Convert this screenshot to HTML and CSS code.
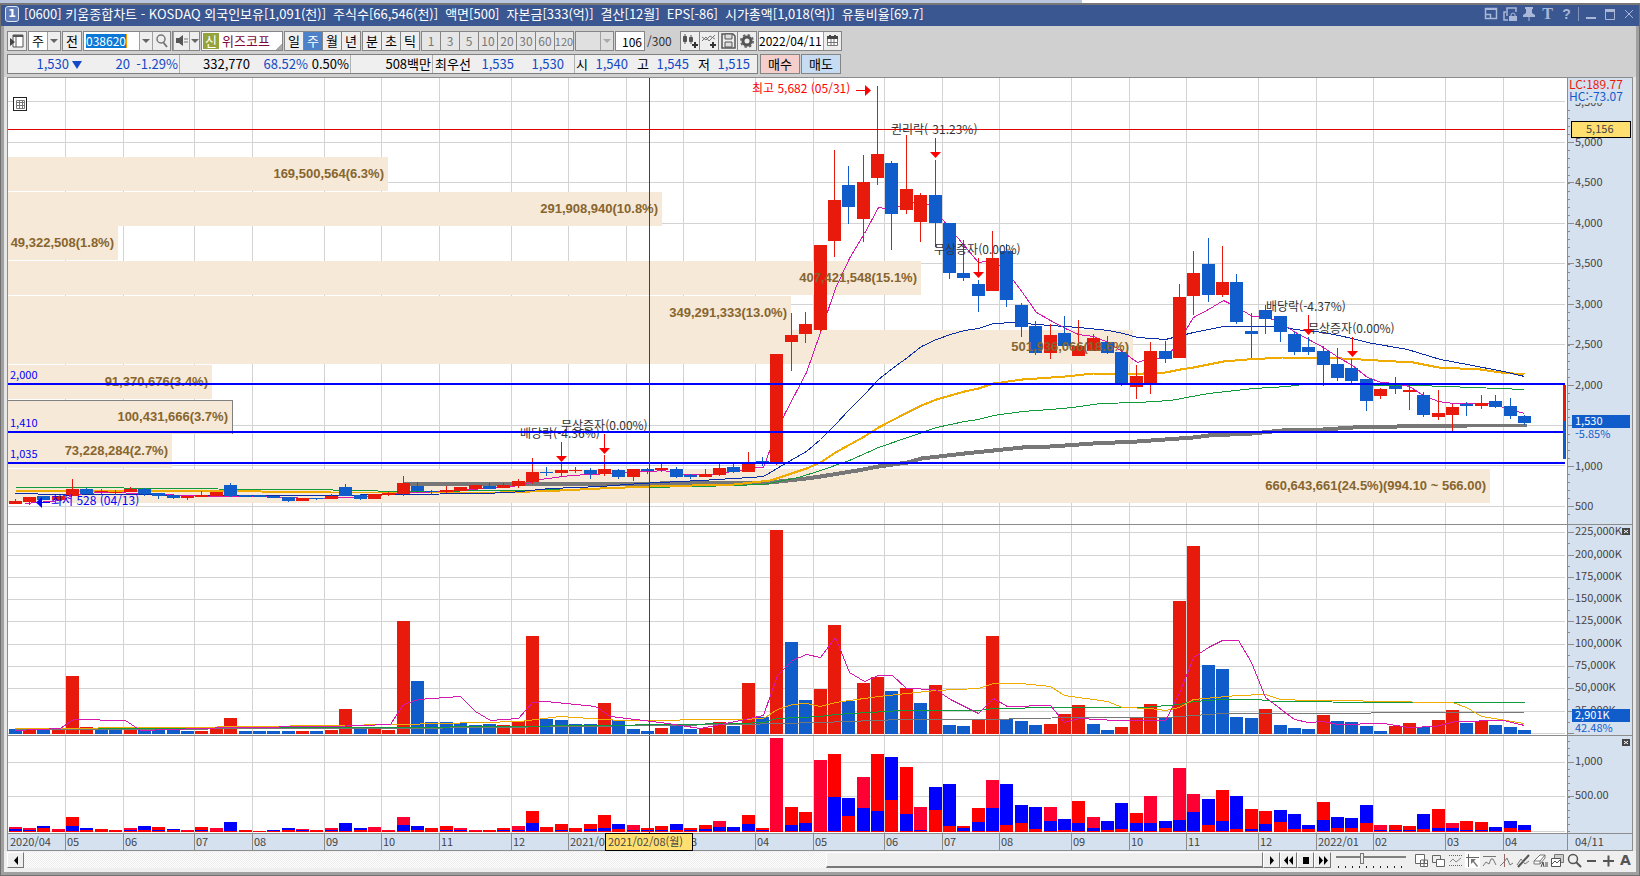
FILE: index.html
```html
<!DOCTYPE html>
<html lang="ko">
<head>
<meta charset="utf-8">
<title>키움종합차트</title>
<link rel="stylesheet" href="styles.css">
</head>
<body>
<div class="backdrop"></div>
<main class="window">
  <header class="titlebar">
    <b class="badge">1</b>
    <h1 class="title"><span>[0600] 키움종합차트 - KOSDAQ 외국인보유[1,091(천)]</span> <span>주식수[66,546(천)]</span> <span>액면[500]</span> <span>자본금[333(억)]</span> <span>결산[12월]</span> <span>EPS[-86]</span> <span>시가총액[1,018(억)]</span> <span>유통비율[69.7]</span></h1>
    <div class="winbtns">
      <button aria-label="화면 배치"><svg width="14" height="14"><path d="M1.500 1.500h11v10h-11zM1.500 7.500h5v4" fill="none" stroke="#a9b8d8" stroke-width="1.500"/><path d="M1 1h12v2H1z" fill="#a9b8d8"/></svg></button>
      <button aria-label="화면 잠금"><svg width="14" height="14"><path d="M4 9V1h9v4M3 5H1v8h4" fill="none" stroke="#a9b8d8" stroke-width="1.500"/><path d="M6 9h8v5H6z" fill="#a9b8d8"/><path d="M8 9V7q2-2 4 0v2" fill="none" stroke="#a9b8d8"/></svg></button>
      <button aria-label="고정"><svg width="14" height="14"><path d="M3 0h8v2h-1v4l3 2v2H7.500v4h-1v-4H1V8l3-2V2H3z" fill="#a9b8d8"/></svg></button>
      <button class="serif">T</button>
      <button class="help">?</button>
      <i class="bar"></i>
      <button aria-label="최소화"><svg width="14" height="14"><path d="M2 10h10v2H2z" fill="#a9b8d8"/></svg></button>
      <button aria-label="최대화"><svg width="14" height="14"><path d="M2.500 3v9.500h9V3z" fill="none" stroke="#a9b8d8"/><path d="M2 2h10v3H2z" fill="#a9b8d8"/></svg></button>
      <button aria-label="닫기"><svg width="14" height="14"><path d="M3 3l8 8M11 3l-8 8" stroke="#a9b8d8"/></svg></button>
    </div>
  </header>

  <section class="tools">
    <div class="row">
      <button class="b w20" aria-label="패널"><svg width="14" height="14"><path d="M3 1h10v12H3z" fill="#fff" stroke="#555"/><path d="M3 1h10v2H3z" fill="#555"/><path d="M6 3v10" stroke="#555"/><path d="M0 4l5 4-5 4z" fill="#444"/></svg></button>
      <span class="combo"><select class="w18" aria-label="주기"><option>주</option></select><i class="arrow w13"></i></span>
      <button class="b w20">전</button>
      <span class="combo"><input class="code" aria-label="종목코드" value=""><mark class="picked">038620</mark><i class="arrow w13"></i><button class="inner w18" aria-label="종목검색"><svg width="14" height="14"><circle cx="6" cy="5" r="4" fill="none" stroke="#777" stroke-width="1.500"/><path d="M8 8l4 5" stroke="#777" stroke-width="2"/></svg></button></span>
      <span class="combo"><button class="inner w16" aria-label="소리"><svg width="14" height="14"><path d="M1 4h3l4-3v11L4 9H1z" fill="#555"/><path d="M10 4v5M12 4v5" stroke="#777" stroke-dasharray="2 1"/></svg></button><i class="arrow w10"></i></span>
      <span class="combo stock"><b>신</b><em>위즈코프</em></span>
      <div class="group"><button>일</button><button class="on">주</button><button>월</button><button>년</button></div>
      <div class="group"><button>분</button><button>초</button><button>틱</button></div>
      <div class="group off"><button>1</button><button>3</button><button>5</button><button>10</button><button>20</button><button>30</button><button>60</button><button>120</button></div>
      <span class="combo dis"><select class="w24" aria-label="단위" disabled><option></option></select><i class="arrow w13"></i></span>
      <input class="count" aria-label="봉 개수" value="106">
      <span class="total">/300</span>
      <div class="group icons">
        <button aria-label="차트 추가"><svg width="16" height="16"><path d="M1.500 3.500h3v5h-3zM3 1v10M7.500 4.500h3v4h-3zM9 2v9" fill="#555" stroke="#555"/><path d="M13 9v6M10 12h6" stroke="#333" stroke-width="2"/></svg></button>
        <button aria-label="지표 추가"><svg width="16" height="16"><path d="M1 8l4-4 3 4 6-6M1 4l4 3 4-4 5 3" fill="none" stroke="#777"/><path d="M12 9v6M9 12h6" stroke="#333" stroke-width="2"/></svg></button>
        <button aria-label="저장"><svg width="16" height="16"><path d="M2 1h11l2 2v12H2z" fill="none" stroke="#555" stroke-width="1.500"/><path d="M5 1h7v5H5zM5 9h7v5H5z" fill="#ddd" stroke="#555"/></svg></button>
        <button aria-label="설정"><svg width="16" height="16"><circle cx="8" cy="8" r="4" fill="none" stroke="#555" stroke-width="3"/><circle cx="8" cy="8" r="6" fill="none" stroke="#666" stroke-width="2" stroke-dasharray="2.400 2.300"/></svg></button>
      </div>
      <span class="combo"><input class="date" aria-label="날짜" value="2022/04/11"><button class="inner w18" aria-label="달력"><svg width="14" height="14"><path d="M1.500 2.500h10v9h-10zM1.500 8.500h10M5 5v7M8 5v7" fill="#fff" stroke="#777"/><path d="M1 2h11v3H1zM3 1h2v2H3zM8 1h2v2H8z" fill="#444"/></svg></button></span>
    </div>
    <div class="row quote">
      <div class="quotes">
        <div class="cell"><span class="n q73">1,530<i class="down"></i></span><span class="n q48">20</span><span class="n q48">-1.29%</span></div>
        <div class="cell"><span class="k q69">332,770</span><span class="n q58">68.52%</span><span class="k q41">0.50%</span></div>
        <div class="cell"><span class="k q80">508백만</span></div>
        <div class="cell"><span class="k q37">최우선</span><span class="n q43">1,535</span><span class="n q50">1,530</span></div>
        <div class="cell"><span class="k q12">시</span><span class="n q40">1,540</span><span class="k q21">고</span><span class="n q40">1,545</span><span class="k q21">저</span><span class="n q40">1,515</span></div>
      </div>
      <button class="trade buy">매수</button>
      <button class="trade sell">매도</button>
    </div>
  </section>

  <section class="chart">
    <div class="plots">
      <svg id="price" height="446"></svg>
      <svg id="volume" height="211"></svg>
      <svg id="credit" height="98"></svg>
      <svg id="dates" height="18"></svg>
    </div>
    <div class="axes">
      <svg id="priceAxis" height="446"></svg>
      <svg id="volumeAxis" height="211"></svg>
      <svg id="creditAxis" height="98"></svg>
      <svg id="dateAxis" height="18"></svg>
    </div>
  </section>

  <footer class="bottom">
    <button class="sb" aria-label="왼쪽"><svg width="14" height="14"><path d="M9 3v9L5 7.500z"/></svg></button>
    <div class="track"><div class="thumb"></div></div>
    <button class="sb" aria-label="오른쪽"><svg width="14" height="14"><path d="M5 3v9l4-4.500z"/></svg></button>
    <button class="sb" aria-label="뒤로"><svg width="14" height="14"><path d="M6 3v9L2 7.500zM11 3v9L7 7.500z"/></svg></button>
    <button class="sb" aria-label="정지"><svg width="14" height="14"><path d="M4 4h6v7H4z"/></svg></button>
    <button class="sb" aria-label="앞으로"><svg width="14" height="14"><path d="M3 3v9l4-4.500zM8 3v9l4-4.500z"/></svg></button>
    <input class="zoom" type="range" min="0" max="100" value="36" aria-label="확대">
    <div class="drawtools">
      <button aria-label="새 창"><svg width="15" height="15"><path d="M1.500 1.500h9v9h-9zM7 7h6.500v6.500H6.500V7M10 7v7M6 10.500h8" fill="#fff" stroke="#666"/></svg></button>
      <button aria-label="겹치기"><svg width="15" height="15"><path d="M1.500 2.500h8v7h-8z" fill="#eee" stroke="#666"/><path d="M5.500 6.500h8v7h-8z" fill="#fff" stroke="#666"/></svg></button>
      <button aria-label="영역"><svg width="15" height="15"><path d="M1 2.500h13M1 12.500h13" stroke="#666" stroke-dasharray="1 1"/><path d="M2 9l3-3 3 3 5-4" fill="none" stroke="#888"/></svg></button>
      <button class="sel" aria-label="선택"><svg width="15" height="15"><path d="M3.500 1v13M1 4.500h13" stroke="#666"/><path d="M6 6h5l-2 2 4 5-1 1-4-5-2 2z" fill="#777"/></svg></button>
      <button aria-label="수평선"><svg width="15" height="15"><path d="M1 3.500h13M1 13l3-4 3 2 2-5 2 0 3 6" fill="none" stroke="#777"/></svg></button>
      <button aria-label="수직선"><svg width="15" height="15"><path d="M5.500 1v13" stroke="#966"/><path d="M1 13l4-4 3-4 3 7 3-2" fill="none" stroke="#777"/></svg></button>
      <button aria-label="추세선"><svg width="15" height="15"><path d="M2 14L13 2" stroke="#555" stroke-width="2"/><path d="M1 12l4-6 4 5 4-3" fill="none" stroke="#777"/></svg></button>
      <button aria-label="지우개"><svg width="15" height="15"><path d="M1 8l6-6h5L7 8zM1 8v3h6V8M7 11l5-6V2" fill="#fff" stroke="#777"/><path d="M8 14l2-5 1 5M13 9v5M15 9v5" fill="none" stroke="#444"/></svg></button>
      <button aria-label="저장 그림"><svg width="15" height="15"><path d="M4.500 1.500h9v8h-9z" fill="#ccc" stroke="#777"/><path d="M1.500 5.500h9v8h-9z" fill="#fff" stroke="#555"/><path d="M2 11l3-3 2 2 3-3" fill="none" stroke="#555"/></svg></button>
      <button aria-label="돋보기"><svg width="15" height="15"><circle cx="6" cy="6" r="4.500" fill="none" stroke="#555" stroke-width="1.500"/><path d="M9 9l5 5" stroke="#555" stroke-width="2"/></svg></button>
      <button aria-label="축소"><svg width="15" height="15"><path d="M3 7h9v2H3z" fill="#555"/></svg></button>
      <button aria-label="확대"><svg width="15" height="15"><path d="M2 7h11v2H2zM6.500 2.500h2v11h-2z" fill="#555"/></svg></button>
      <button class="big">A</button>
    </div>
  </footer>
</main>
<script src="chart.js"></script>
</body>
</html>
```

FILE: styles.css
```css
* { box-sizing: border-box; }
body {
  margin: 0;
  min-height: 100vh;
  display: flex;
  flex-direction: column;
  background: #a0a0a0;
  color: #000;
  font: 13px/16px "Noto Sans CJK KR", sans-serif;
}
button, input, select { font: inherit; color: inherit; margin: 0; padding: 0; border: 0; border-radius: 0; background: none; }
button { display: inline-flex; align-items: center; justify-content: center; }
svg { display: block; flex: none; }
.backdrop { height: 3px; background: linear-gradient(90deg, #bac6dd 66%, #fff 66%); }
.window { display: flex; flex-direction: column; border: 1px solid #707070; border-top: 2px solid #777; flex: 1; }

.titlebar { height: 21px; background: #3a5792; color: #fff; display: flex; align-items: center; padding: 0 3px 3px 4px; }
.badge { width: 14px; height: 16px; border: 1px solid #dfe6f4; border-radius: 3px; background: #5f7cb8; font: bold 11px/14px "DejaVu Sans", sans-serif; text-align: center; }
.title { margin: 0 auto 0 5px; font: 13px/16px "Noto Sans CJK KR", sans-serif; white-space: nowrap; display: flex; gap: 7px; }
.winbtns { display: flex; align-items: center; gap: 4px; color: #a9b8d8; }
.winbtns button { width: 15px; height: 16px; }
.winbtns .serif { font: bold 16px/16px "Liberation Serif", serif; }
.winbtns .help { font: bold 14px/16px "Liberation Sans", sans-serif; }
.bar { width: 1px; height: 14px; background: #8294bd; }

.tools { background: #d0d0d0; margin: 0 3px; padding: 5px 0 3px 3px; display: flex; flex-direction: column; gap: 3px; }
.row { display: flex; align-items: center; gap: 1px; height: 20px; white-space: nowrap; }
.b, .combo, .group button, .count { height: 20px; border: 1px solid #858585; background: #eee; }
.combo { display: inline-flex; align-items: stretch; background: #fff; position: relative; }
.combo select { appearance: none; text-align: center; }
.inner, .arrow { border-left: 1px solid #a0a0a0; background: #eee; }
.arrow { display: flex; align-items: center; justify-content: center; }
.arrow::before { content: ""; border: 4px solid transparent; border-top-color: #666; border-bottom: 0; }
.w10 { width: 10px; } .w13 { width: 13px; } .w16 { width: 16px; } .w18 { width: 18px; } .w20 { width: 20px; } .w24 { width: 24px; }
.code { width: 55px; }
.picked { position: absolute; left: 2px; top: 2px; background: #0a78d7; color: #fff; font-size: 12px; line-height: 14px; border-right: 1px solid #f90; }
.stock { width: 82px; padding: 1px; gap: 3px; background: linear-gradient(135deg, #fff 93%, #aaa 93%); }
.stock b { width: 16px; background: #95a33a; color: #fff; font-weight: 400; text-align: center; }
.stock em { font-style: normal; color: #7a0a40; }
.group { display: flex; padding-right: 1px; }
.group button { width: 20px; margin-right: -1px; }
.group .on { background: #4e82c8; color: #fff; }
.off button { color: #777; background: #e6e6e6; font-size: 12px; }
.off button:last-child { font-size: 11px; }
.dis, .dis select, .dis .arrow { background: #e0e0e0; }
.dis .arrow::before { border-top-color: #aaa; }
.count { width: 30px; background: #fff; text-align: right; padding-right: 2px; font-size: 12px; }
.total { width: 33px; color: #333; padding-left: 1px; font-size: 12px; }
.date { width: 64px; font-size: 12px; }

.quotes { display: flex; height: 20px; border: 1px solid #808080; background: #efefef; width: 751px; }
.cell { display: flex; align-items: center; border-right: 1px solid #b0b0b0; padding-right: 1px; }
.cell:last-child { border: 0; }
.cell span { text-align: right; }
.n { color: #1349c6; }
.down { display: inline-block; border: 5px solid transparent; border-top: 8px solid #1349c6; border-bottom: 0; margin-left: 3px; }
.q73 { width: 74px; } .q48 { width: 48px; } .q69 { width: 70px; } .q58 { width: 58px; } .q41 { width: 41px; } .q80 { width: 80px; }
.q37 { width: 38px; } .q43 { width: 43px; } .q50 { width: 59px; padding-right: 9px; } .q12 { width: 13px; } .q40 { width: 40px; } .q21 { width: 21px; }
.trade { width: 40px; height: 20px; border: 1px solid #858585; }
.buy { background: #f4cfcb; margin-left: 1px; }
.sell { background: #c5dcf2; }

.chart { display: flex; margin: 0 3px; padding: 0 3px; background: #e6e6e6; }
.plots { flex: 1; min-width: 0; background: #fff; border-left: 1px solid #8c8c8c; border-top: 1px solid #8c8c8c; }
.axes { width: 66px; background: #d6e1ef; border-top: 1px solid #8c8c8c; border-right: 1px solid #8c8c8c; }
.plots svg { width: 100%; }
.axes svg { width: 65px; }
#dates { background: #d6e1ef; }
.chart text { fill: #444; font-size: 11px; }
.chart .note { font-size: 12px; }
.chart .profile { font: bold 13px "Liberation Sans", sans-serif; fill: #87652f; text-anchor: end; }

.bottom { display: flex; align-items: center; margin: 0 3px 3px; padding: 0 3px 3px; background: #efefef; height: 21px; }
.sb { width: 17px; height: 16px; border: 1px solid #fff; border-right-color: #777; border-bottom-color: #777; background: #efefef; }
.track { flex: 1; height: 16px; display: flex; justify-content: flex-end; background: repeating-conic-gradient(#fff 0 25%, #ececec 0 50%) 0 0 / 2px 2px; }
.thumb { width: 35.3%; border: 1px solid #fff; border-right-color: #777; border-bottom: 2px solid #777; background: #efefef; }
.zoom { appearance: none; width: 70px; height: 16px; margin: 0 8px 0 5px; background: linear-gradient(#808080, #808080) 0 4px / 100% 2px no-repeat, repeating-linear-gradient(90deg, #222 0 1px, transparent 1px 7px) 2px 14px / 100% 2px no-repeat; }
.zoom::-webkit-slider-thumb { appearance: none; width: 4px; height: 11px; border: 1px solid #777; background: #eee; margin-bottom: 4px; }
.drawtools { display: flex; gap: 2px; }
.drawtools button { width: 15px; height: 16px; }
.drawtools .sel { background: #fff; }
.drawtools .big { font: bold 14px/16px "DejaVu Sans", sans-serif; color: #555; }
```

FILE: chart.js
```js
const RED = "#e81a0b", BLUE = "#115ccb";
const NS = "http://www.w3.org/2000/svg";

// Weekly candles: direction, high, body top, body bottom, low.
const candles = `R499,501,504,504 R497,497,502,505 B496,496,500,500 R496,496,500,500 R479,489,496,496 B488,489,494,494 R489,491,492,494
R490,492,493,495 R487,489,492,492 B488,489,494,496 B493,493,496,499 B494,495,498,499 R496,496,498,500 R491,495,497,497 R492,492,496,496
B483,485,496,497 B495,495,497,497 B495,495,497,497 B496,496,498,498 B497,497,501,502 R498,498,501,501 B498,498,499,500 R494,496,499,499
B484,487,496,496 B494,495,499,500 R494,494,499,499 R492,493,495,496 R476,483,494,496 B482,486,491,493 B490,491,492,495 R486,490,492,493
R487,487,491,491 R485,485,489,490 B483,486,489,489 R483,485,488,488 R479,481,486,488 R458,472,482,484 B467,472,473,476 R462,470,473,477
R467,470,471,473 B468,470,474,479 R455,469,474,476 B469,470,477,479 R469,469,477,481 B468,469,471,474 R464,468,470,472 B467,469,477,478
B474,475,477,479 R469,474,477,477 R464,468,475,476 B463,467,472,473 R452,463,472,472 B457,461,462,466 R354,354,462,465 R313,335,342,371
R312,324,334,343 R245,245,330,332 R150,200,241,257 B166,185,207,224 R155,182,219,242 R86,154,178,185 B161,163,214,250 R135,189,210,214
R193,195,222,242 B160,195,223,247 B223,223,273,279 B240,273,278,281 B280,284,296,312 R231,258,291,291 B244,251,300,307 B303,305,327,337
B321,326,353,355 R324,335,353,359 B316,333,346,346 R320,346,356,356 R334,338,351,351 B336,342,353,354 B349,352,384,386 R365,376,387,399
R342,351,384,394 B341,351,359,363 R284,297,358,358 R251,273,296,315 B238,264,295,302 R246,282,295,297 B274,282,322,324 B313,331,334,358
B305,310,319,334 B316,316,332,342 B332,334,352,355 B337,347,352,355 B346,351,365,386 B348,364,378,381 B359,368,381,383 B379,379,401,411
R388,389,396,399 B377,386,389,394 R385,390,392,410 B392,395,415,417 R390,413,417,420 R404,407,415,431 B402,404,406,416 R395,403,406,409
B395,401,407,408 B398,406,416,419 B415,416,423,425`.split(/\s+/);

// Volume bars: direction and top.
const volumes = `B729 R730 B730 R730 R676 R727 B730 B730 R728 B729 B730 B730 B731 R731 R728 R718 B731 B731 B731 B731 R731 B731 R730 R709 B729 R729 R730
R621 B681 B722 B722 B723 B725 B724 R725 R721 R636 B719 B720 B724 B724 R703 B720 B729 B731 R728 B726 B729 R728 R722 B726
R683 B717 R530 B642 B700 R689 R625 B701 R683 R677 B691 R688 B703 R685 B725 B726 R720 R636 B719 B721 B725 R724 R714 R705 B724 B730 R727 R718 R704
B718 R601 R546 B665 B669 B717 B718 R709 B725 B728 B729 R715 B721 B722 B726 B731 R726 R723 B727 R720 R710 B723 R721 B725 B727 B730`.split(/\s+/);

// Two-part bars: colour of the upper part, top, split (832 when there is one part).
const credits = `C827,829 C828,830 B826,828 C829,832 R817,826 B828,830 R829,832 R830,832 C828,830 B826,830 R827,830 B829,830 C830,832 R827,830
C828,831 B822,832 R830,832 R831,832 B830,832 B828,830 C829,830 R830,832 C828,830 B823,832 B828,830 C827,832 C830,832 C817,825 B826,830
R828,832 R826,830 C828,830 C830,832 R830,832 R828,830 C826,830 R811,823 R827,832 R824,830 R828,832 R824,829 R815,828 B824,829 C825,830
R828,830 R826,830 B824,830 R828,830 R825,829 C821,827 B827,832 R815,824 R828,830 C738,832 R807,825 R812,823 C760,832 R754,797 B798,816
C777,808 R754,811 B757,800 R767,814 C807,830 B787,810 B784,826 R826,828 R808,822 C780,808 B784,825 B805,823 B807,829 C807,821 B819,830
R801,823 C817,828 B821,830 B803,829 R813,823 C796,823 B821,828 C768,820 C794,812 B799,825 R790,821 B796,829 R809,829 R811,824 B810,822
B814,829 B825,829 R802,820 B817,828 B818,828 B805,823 C825,830 R825,830 R826,830 B814,829 R809,828 C823,828 R821,830 R822,830 B827,832
B821,828 B825,830`.split(/\s+/);

const priceLines = [
  ["#777", 4, "403,483 447,483 448,484 660,483 770,482 806,478 820,476 857,470 878,466 907,462 921,458 964,453 993,450 1022,447 1050,446 1093,443 1137,441 1165,439 1193,437 1208,435 1252,433 1282,430 1323,429 1353,427 1397,426 1468,425 1526,425"],
  ["#109a3c", 1, "15,487 123,487 124,488 310,489 400,491 520,490 600,488 640,487 700,486 763,484 798,477 820,470 849,460 878,447 907,437 936,427 964,421 978,419 993,415 1022,411 1050,409 1072,407 1100,403 1137,402 1170,400 1208,393 1253,388 1287,386 1302,384 1417,385 1473,387 1524,389"],
  ["#f0ab00", 2, "15,490 155,490 260,491 330,492 500,492 560,490 600,488 650,486 734,484 770,480 806,468 820,462 835,452 864,436 878,427 907,412 921,405 936,399 964,391 978,388 993,383 1022,379 1065,376 1093,373 1143,373 1165,372 1180,369 1193,367 1208,364 1223,361 1247,359 1282,357 1323,357 1360,359 1413,362 1438,367 1480,369 1500,372 1524,374"],
  ["#0c2da8", 1, "15,493 60,494 120,494 200,495 320,495 400,494 480,493 510,492 550,488 600,486 640,483 700,480 750,477 763,476 785,463 806,451 820,439 835,424 849,409 864,394 878,379 892,368 907,357 921,346 936,339 950,334 964,330 978,328 993,323 1015,322 1036,324 1050,325 1078,327 1108,330 1123,333 1137,337 1165,339 1173,337 1193,332 1223,326 1280,326 1295,329 1323,332 1338,335 1352,338 1367,342 1407,349 1440,359 1467,364 1503,371 1524,376"],
  ["#d816b0", 1, "25,503 60,500 75,494 100,492 150,493 180,495 210,496 260,496 310,498 350,497 400,493 440,491 500,487 520,485 540,479 570,475 610,473 650,471 663,470 685,474 710,474 740,470 755,467 763,467 770,448 784,414 806,372 820,332 835,288 849,258 864,233 878,207 891,209 907,203 921,201 930,205 943,220 957,237 978,262 993,260 1007,272 1022,292 1036,312 1050,320 1065,328 1078,334 1093,336 1108,342 1123,352 1137,362 1150,358 1165,358 1173,348 1187,327 1193,317 1208,309 1223,300 1237,307 1252,316 1267,317 1280,322 1295,332 1310,340 1323,347 1338,357 1352,365 1367,377 1381,382 1395,383 1409,386 1423,395 1438,401 1453,403 1490,403 1503,407 1524,413"]
];

const volumeLines = [
  ["#777", 1, "15,729 400,728 740,724 820,722 901,719 987,719 1073,717 1165,717 1222,713 1524,712"],
  ["#109a3c", 1, "15,728 400,727 600,725 740,723 763,722 777,718 820,716 835,714 901,710 978,710 993,708 1056,707 1142,707 1179,704 1193,701 1222,699 1257,699 1274,701 1389,702 1524,702"],
  ["#f0ab00", 1, "15,728 180,727 400,724 520,721 560,716 620,720 740,719 763,718 777,709 792,704 806,703 820,706 835,702 878,696 935,690 978,688 993,683 1021,683 1050,686 1064,695 1107,701 1122,707 1150,708 1165,710 1179,707 1193,699 1237,695 1265,694 1280,699 1308,700 1354,700 1371,701 1452,702 1466,707 1481,716 1524,723"],
  ["#d816b0", 1, "15,730 60,728 73,719 125,720 140,730 230,727 330,726 390,724 403,704 418,699 460,696 475,711 490,720 518,718 532,702 545,701 595,706 610,716 660,722 700,728 740,720 763,715 777,675 792,660 806,654 820,657 835,637 849,672 864,681 878,675 892,675 906,688 935,689 950,699 978,713 993,698 1007,706 1050,705 1064,722 1079,718 1116,720 1165,720 1179,693 1193,657 1208,647 1222,640 1238,640 1251,662 1265,697 1294,719 1308,722 1323,721 1337,724 1383,723 1409,727 1435,726 1455,721 1503,720 1524,725"]
];

// Trading volume by price band: top, right edge, label.
const bands = [
  [157, 388, "169,500,564(6.3%)"], [192, 662, "291,908,940(10.8%)"], [226, 118, "49,322,508(1.8%)"],
  [261, 921, "407,421,548(15.1%)"], [296, 791, "349,291,333(13.0%)"], [330, 1133, "501,936,066(18.6%)"],
  [365, 212, "91,370,676(3.4%)"], [400, 232, "100,431,666(3.7%)"], [434, 172, "73,228,284(2.7%)"],
  [469, 1490, "660,643,661(24.5%)(994.10 ~ 566.00)"]
];

const events = [
  [891, 130, "권리락(-31.23%)", 935, 138], [934, 250, "무상증자(0.00%)", 978, 258], [520, 434, "배당락(-4.36%)", 561, 442],
  [561, 426, "무상증자(0.00%)", 604, 434], [1266, 307, "배당락(-4.37%)", 1308, 315], [1308, 329, "무상증자(0.00%)", 1352, 337]
];

const months = { 4: "05", 8: "06", 13: "07", 17: "08", 22: "09", 26: "10", 30: "11", 35: "12", 39: "2021/01", 43: "02", 47: "03", 52: "04",
  56: "05", 61: "06", 65: "07", 69: "08", 74: "09", 78: "10", 82: "11", 87: "12", 91: "2022/01", 95: "02", 100: "03", 104: "04" };

const LEFT = 8, SPAN = 1559;
let k = 1;
const X = x => Math.round((x - LEFT) * k);
const barX = i => Math.floor(9 + 14.375 * i);

function add(svg, tag, attrs, text) {
  const el = document.createElementNS(NS, tag);
  for (const name in attrs) el.setAttribute(name, attrs[name]);
  if (text !== undefined) el.textContent = text;
  svg.appendChild(el);
  return el;
}
const box = (svg, x, y, w, h, fill) => add(svg, "rect", { x, y, width: w, height: h, fill, "shape-rendering": "crispEdges" });
const label = (svg, x, mid, text, fill, cls) => {
  const el = add(svg, "text", { x, y: mid + 4, class: cls || "" }, text);
  if (fill) el.style.fill = fill;
};

function prepare(id, top, height, width) {
  const svg = document.getElementById(id);
  svg.replaceChildren();
  svg.setAttribute("viewBox", `0 ${top} ${width} ${height}`);
  return svg;
}
function grid(svg, top, height, rows, width) {
  for (const y of rows) box(svg, 0, y, width - 2, 1, "#d3d3d3");
  for (const i in months) box(svg, X(barX(+i) - 1), top, 1, height, "#d3d3d3");
}
function lines(svg, set) {
  for (const [stroke, w, points] of set) {
    const moved = points.split(" ").map(p => { const [x, y] = p.split(","); return `${X(+x) + 0.5},${+y + 0.5}`; }).join(" ");
    add(svg, "polyline", { points: moved, fill: "none", stroke, "stroke-width": w, "shape-rendering": "crispEdges" });
  }
}

function draw() {
  const width = document.querySelector(".plots").clientWidth;
  k = width / SPAN;
  const bw = Math.max(1, Math.round(13 * k));

  const p = prepare("price", 78, 446, width);
  grid(p, 78, 446, [101, 142, 182, 223, 263, 304, 344, 384, 425, 465, 506], width);
  for (const [y, right] of bands) {
    if (y === 400) box(p, 0, y, X(right) + 1, 34, "#808080");
    box(p, 0, y + (y === 400), X(right), 34 - (y === 400), "#f6e9d7");
  }
  box(p, 5, 97, 14, 14, "#222");
  box(p, 6, 98, 12, 12, "#fff");
  add(p, "path", { d: "M8.500 100.500h8v8h-8zM11.500 100v9M14.500 100v9M8 102.500h9M8 105.500h9", fill: "none", stroke: "#777" });
  lines(p, priceLines);
  candles.forEach((c, i) => {
    const fill = c[0] === "R" ? RED : BLUE;
    const [hi, top, bottom, lo] = c.slice(1).split(",").map(Number);
    const x = X(barX(i));
    box(p, x + (bw >> 1), hi, 1, lo - hi, fill);
    box(p, x, top, bw, bottom - top, fill);
  });
  for (const [y, right, text] of bands) label(p, X(right) - 4, y + 17, text, "", "profile");
  for (const [x, y, text, ax, ay] of events) {
    label(p, X(x), y, text, "#333", "note");
    box(p, X(ax), ay, 1, 15, "#f00");
    add(p, "path", { d: `M${X(ax) - 5} ${ay + 14}h11l-5.500 6z`, fill: "#f00" });
  }
  for (const [y, text] of [[383, "2,000"], [431, "1,410"], [462, "1,035"]]) {
    box(p, 0, y, width - 2, 2, "#00f");
    label(p, 2, y - 8, text, "#00f");
  }
  label(p, X(752), 89, "최고 5,682 (05/31)", "#f00", "note");
  box(p, X(856), 90, 10, 1, "#f00");
  add(p, "path", { d: `M${X(865)} 85v11l6-5.500z`, fill: "#f00" });
  label(p, X(51), 501, "최저 528 (04/13)", "#00f", "note");
  box(p, X(42), 502, 8, 1, "#00f");
  add(p, "path", { d: `M${X(42)} 497v11l-6-5.500z`, fill: "#00f" });
  box(p, width - 4, 385, 3, 36, RED);
  box(p, width - 4, 421, 3, 38, BLUE);
  box(p, 0, 129, width - 2, 1, "#e00000");
  box(p, X(649), 78, 1, 446, "#e00000");

  const v = prepare("volume", 524, 211, width);
  grid(v, 524, 211, [532, 555, 577, 599, 621, 644, 666, 688, 711, 733], width);
  box(v, 0, 524, width, 1, "#8c8c8c");
  volumes.forEach((c, i) => box(v, X(barX(i)), +c.slice(1), bw, 734 - c.slice(1), c[0] === "R" ? RED : BLUE));
  lines(v, volumeLines);
  box(v, X(649), 525, 1, 210, "#e00000");

  const s = prepare("credit", 735, 98, width);
  grid(s, 735, 98, [762, 796, 831], width);
  box(s, 0, 735, width, 1, "#8c8c8c");
  const tones = { R: "#f00", B: "#00f", C: "#ff0033" };
  credits.forEach((c, i) => {
    const [top, split] = c.slice(1).split(",").map(Number);
    box(s, X(barX(i)), top, bw, 832 - top, tones[c[0]]);
    if (split < 832) box(s, X(barX(i)), split, bw, 832 - split, c[0] === "B" ? "#f00" : "#00f");
    box(s, X(barX(i)), 831, bw, 1, "#f00");
  });
  box(s, X(649), 736, 1, 97, "#e00000");

  const d = prepare("dates", 833, 18, width);
  box(d, 0, 833, width, 1, "#8c8c8c");
  label(d, 2, 842, "2020/04");
  for (const i in months) {
    box(d, X(barX(+i) - 1), 833, 1, 18, "#8c8c8c");
    label(d, X(barX(+i) + 1), 842, months[i]);
  }
  box(d, 0, 850, width, 1, "#8c8c8c");
  box(d, X(605), 833, 88, 18, "#000");
  box(d, X(605) + 1, 834, 86, 16, "#ffdf70");
  label(d, X(605) + 3, 842, "2021/02/08(월)");
}

function axes() {
  const a = prepare("priceAxis", 78, 446, 65);
  box(a, 0, 78, 1, 446, "#8c8c8c");
  for (let i = 0; i < 53; i++) box(a, 1, Math.round(514.4 - i * 8.09), 2, 1, "#8c8c8c");
  for (let i = 0; i < 11; i++) {
    const y = Math.round(506 - i * 40.45);
    box(a, 1, y, 6, 1, "#8c8c8c");
    label(a, 8, y, (500 + i * 500).toLocaleString("en-US"));
  }
  box(a, 1, 78, 63, 25, "#d6e1ef");
  label(a, 2, 85, "LC:189.77", RED, "note");
  label(a, 2, 97, "HC:-73.07", BLUE, "note");
  box(a, 4, 121, 60, 17, "#000");
  box(a, 5, 122, 58, 15, "#ffdf70");
  label(a, 19, 129, "5,156");
  box(a, 7, 427, 56, 12, "#d6e1ef");
  box(a, 5, 415, 58, 13, BLUE);
  label(a, 8, 421, "1,530", "#fff");
  label(a, 8, 434, "-5.85%", BLUE);

  const v = prepare("volumeAxis", 524, 211, 65);
  box(v, 0, 524, 65, 1, "#8c8c8c");
  box(v, 0, 524, 1, 211, "#8c8c8c");
  [733, 711, 688, 666, 644, 621, 599, 577, 555, 532].forEach((y, i) => {
    box(v, 1, y, 6, 1, "#8c8c8c");
    if (i) box(v, 1, y + 11, 2, 1, "#8c8c8c");
    if (i) label(v, 8, y - 1, i * 25 + ",000K");
  });
  box(v, 5, 709, 58, 13, BLUE);
  label(v, 8, 715, "2,901K", "#fff");
  label(v, 8, 728, "42.48%", BLUE);
  closeMark(v, 528);

  const s = prepare("creditAxis", 735, 98, 65);
  box(s, 0, 735, 65, 1, "#8c8c8c");
  box(s, 0, 735, 1, 98, "#8c8c8c");
  for (let i = 0; i < 14; i++) box(s, 1, Math.round(831 - i * 6.9), 2, 1, "#8c8c8c");
  for (const [y, t] of [[762, "1,000"], [796, "500.00"]]) { box(s, 1, y, 6, 1, "#8c8c8c"); label(s, 8, y - 1, t); }
  closeMark(s, 739);

  const d = prepare("dateAxis", 833, 18, 65);
  box(d, 0, 833, 65, 1, "#8c8c8c");
  box(d, 0, 833, 1, 18, "#8c8c8c");
  box(d, 0, 850, 65, 1, "#8c8c8c");
  label(d, 8, 842, "04/11");
}
function closeMark(svg, y) {
  box(svg, 55, y, 8, 7, "#444");
  add(svg, "path", { d: `M57 ${y + 2}l4 3M61 ${y + 2}l-4 3`, stroke: "#fff" });
}

axes();
draw();
addEventListener("resize", draw);
```
